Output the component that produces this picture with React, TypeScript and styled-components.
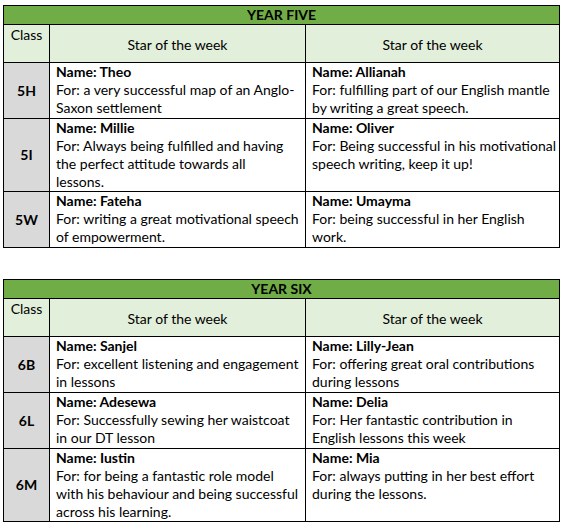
import styled, { createGlobalStyle } from "styled-components";

const GlobalStyle = createGlobalStyle`
  body {
    margin: 0;
    background: #ffffff;
    font-family: Lato, "Liberation Sans", sans-serif;
    color: #000;
  }
`;

const Page = styled.div`
  padding: 5px 3px 0 3px;
  display: flex;
  flex-direction: column;
  gap: 31px;
`;

const Table = styled.table`
  width: 556px;
  border-collapse: collapse;
  table-layout: fixed;
  font-size: 14px;
  line-height: 18px;
`;

const YearCell = styled.th`
  background: #70ad47;
  border: 1px solid #000;
  height: 18px;
  padding: 0;
  font-weight: 700;
  text-align: center;
`;

const HeadCell = styled.th<{ $top?: boolean }>`
  background: #e2efda;
  border: 1px solid #000;
  height: 35px;
  padding: 0;
  font-weight: 400;
  text-align: center;
  vertical-align: ${(p) => (p.$top ? "top" : "middle")};
  padding-top: ${(p) => (p.$top ? "1px" : "2px")};
`;

const StarRow = styled.tr`
  height: 56px;
`;

const ClassCell = styled.td`
  background: #d9d9d9;
  border: 1px solid #000;
  font-weight: 700;
  text-align: center;
  vertical-align: middle;
  padding: 0;
`;

const StarCell = styled.td`
  border: 1px solid #000;
  padding: 0 6px;
  vertical-align: top;
  white-space: nowrap;
`;

const Line = styled.div<{ $bold?: boolean }>`
  font-weight: ${(p) => (p.$bold ? 700 : 400)};
`;

type Star = { name: string; lines: string[] };
type Row = { cls: string; stars: [Star, Star] };

const years: { title: string; rows: Row[] }[] = [
  {
    title: "YEAR FIVE",
    rows: [
      {
        cls: "5H",
        stars: [
          { name: "Theo", lines: ["For: a very successful map of an Anglo-", "Saxon settlement"] },
          { name: "Allianah", lines: ["For: fulfilling part of our English mantle", "by writing a great speech."] },
        ],
      },
      {
        cls: "5I",
        stars: [
          {
            name: "Millie",
            lines: ["For: Always being fulfilled and having", "the perfect attitude towards all", "lessons."],
          },
          { name: "Oliver", lines: ["For: Being successful in his motivational", "speech writing, keep it up!"] },
        ],
      },
      {
        cls: "5W",
        stars: [
          { name: "Fateha", lines: ["For: writing a great motivational speech", "of empowerment."] },
          { name: "Umayma", lines: ["For: being successful in her English", "work."] },
        ],
      },
    ],
  },
  {
    title: "YEAR SIX",
    rows: [
      {
        cls: "6B",
        stars: [
          { name: "Sanjel", lines: ["For: excellent listening and engagement", "in lessons"] },
          { name: "Lilly-Jean", lines: ["For: offering great oral contributions", "during lessons"] },
        ],
      },
      {
        cls: "6L",
        stars: [
          { name: "Adesewa", lines: ["For: Successfully sewing her waistcoat", "in our DT lesson"] },
          { name: "Delia", lines: ["For: Her fantastic contribution in", "English lessons this week"] },
        ],
      },
      {
        cls: "6M",
        stars: [
          {
            name: "Iustin",
            lines: [
              "For: for being a fantastic role model",
              "with his behaviour and being successful",
              "across his learning.",
            ],
          },
          { name: "Mia", lines: ["For: always putting in her best effort", "during the lessons."] },
        ],
      },
    ],
  },
];

function YearTable({ title, rows }: { title: string; rows: Row[] }) {
  return (
    <Table>
      <colgroup>
        <col style={{ width: 46 }} />
        <col style={{ width: 256 }} />
        <col style={{ width: 254 }} />
      </colgroup>
      <thead>
        <tr>
          <YearCell colSpan={3}>{title}</YearCell>
        </tr>
        <tr>
          <HeadCell $top>Class</HeadCell>
          <HeadCell>Star of the week</HeadCell>
          <HeadCell>Star of the week</HeadCell>
        </tr>
      </thead>
      <tbody>
        {rows.map((row) => (
          <StarRow key={row.cls}>
            <ClassCell>{row.cls}</ClassCell>
            {row.stars.map((s) => (
              <StarCell key={s.name}>
                <Line $bold>Name: {s.name}</Line>
                {s.lines.map((l) => (
                  <Line key={l}>{l}</Line>
                ))}
              </StarCell>
            ))}
          </StarRow>
        ))}
      </tbody>
    </Table>
  );
}

export default function App() {
  return (
    <>
      <GlobalStyle />
      <Page>
        {years.map((y) => (
          <YearTable key={y.title} title={y.title} rows={y.rows} />
        ))}
      </Page>
    </>
  );
}
